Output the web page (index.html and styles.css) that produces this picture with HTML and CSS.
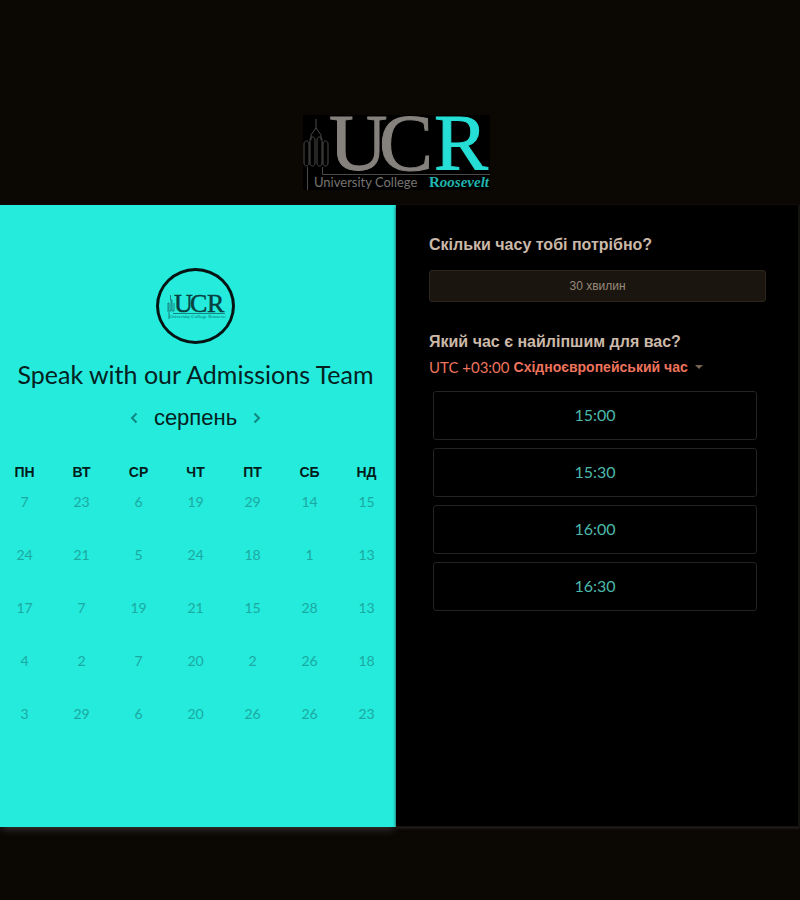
FILE: index.html
```html
<!DOCTYPE html>
<html lang="uk">
<head>
<meta charset="utf-8">
<meta name="viewport" content="width=device-width, initial-scale=1">
<title>Speak with our Admissions Team</title>
<link rel="stylesheet" href="styles.css">
</head>
<body>
<header class="brand">
  <svg class="brand-logo" viewBox="0 0 187 75" role="img" aria-label="University College Roosevelt">
    <rect width="187" height="75" fill="#000"/>
    <g fill="none" stroke="#4b4a48" stroke-width="1">
      <path d="M13 4v9M13 13l-5 7v5M13 13l5 7v5M7 25c0-4 5-4 5 0v23c0 4-5 4-5 0zM14 25c0-4 5-4 5 0v23c0 4-5 4-5 0zM1 29c0-4 5-4 5 0v19c0 4-5 4-5 0zM20 29c0-4 5-4 5 0v19c0 4-5 4-5 0z"/>
      <path d="M4.500 52v23M19.500 52v7.500H187"/>
    </g>
    <g class="serif" font-size="81" stroke-width="1">
      <text x="26" y="55" fill="#85827d" stroke="#85827d">U</text>
      <text x="76" y="55" fill="#85827d" stroke="#85827d">C</text>
      <text x="131" y="55" fill="#25dfd6" stroke="#25dfd6">R</text>
    </g>
    <text class="caption" x="11" y="72" font-size="13" fill="#77746f">University College</text>
    <text class="serif strong" x="126" y="72" font-size="15" fill="#20b5ae">R<tspan class="slanted">oosevelt</tspan></text>
  </svg>
</header>
<main class="scheduler">
  <section class="calendar">
    <div class="avatar">
      <svg class="avatar-logo" viewBox="0 0 60 28" role="img" aria-label="UCR">
        <path d="M4.500 3v5M2 20V11h1v8h2V8h1v11h2v-8M3 20v7M7 21.500h52" fill="none" stroke="#16837f"/>
        <g class="serif" font-size="26" fill="#083f3f" stroke="#083f3f" stroke-width=".5">
          <text x="8" y="20">U</text>
          <text x="24" y="20">C</text>
          <text x="41" y="20">R</text>
        </g>
        <text class="serif" x="3" y="26" font-size="5" fill="#0c6f6c">University College Roosevelt</text>
      </svg>
    </div>
    <h1 class="title">Speak with our Admissions Team</h1>
    <div class="month">
      <button class="step" type="button" aria-label="Попередній місяць">
        <svg viewBox="0 0 8 12"><path d="M6.500 1.500L2 6l4.500 4.500"/></svg>
      </button>
      <h2 class="month-name">серпень</h2>
      <button class="step" type="button" aria-label="Наступний місяць">
        <svg viewBox="0 0 8 12"><path d="M1.500 1.500L6 6l-4.500 4.500"/></svg>
      </button>
    </div>
    <table class="days">
      <thead>
        <tr><th>ПН</th><th>ВТ</th><th>СР</th><th>ЧТ</th><th>ПТ</th><th>СБ</th><th>НД</th></tr>
      </thead>
      <tbody>
        <tr><td>7</td><td>23</td><td>6</td><td>19</td><td>29</td><td>14</td><td>15</td></tr>
        <tr><td>24</td><td>21</td><td>5</td><td>24</td><td>18</td><td>1</td><td>13</td></tr>
        <tr><td>17</td><td>7</td><td>19</td><td>21</td><td>15</td><td>28</td><td>13</td></tr>
        <tr><td>4</td><td>2</td><td>7</td><td>20</td><td>2</td><td>26</td><td>18</td></tr>
        <tr><td>3</td><td>29</td><td>6</td><td>20</td><td>26</td><td>26</td><td>23</td></tr>
      </tbody>
    </table>
  </section>
  <section class="options">
    <h2 class="question">Скільки часу тобі потрібно?</h2>
    <button class="duration" type="button">30 хвилин</button>
    <h2 class="question question-time">Який час є найліпшим для вас?</h2>
    <div class="zone">
      <label class="zone-offset" for="zone">UTC +03:00</label>
      <select class="zone-select" id="zone"><option>Східноєвропейський час</option></select>
      <svg class="caret" viewBox="0 0 8 4"><path d="M0 0h8L4 4z"/></svg>
    </div>
    <div class="slots">
      <button class="slot" type="button">15:00</button>
      <button class="slot" type="button">15:30</button>
      <button class="slot" type="button">16:00</button>
      <button class="slot" type="button">16:30</button>
    </div>
  </section>
</main>
</body>
</html>
```
FILE: styles.css
```css
* {
  box-sizing: border-box;
}

body {
  margin: 0;
  min-height: 100vh;
  background: #0b0703;
  font-family: "Liberation Sans", Arial, sans-serif;
}

h1,
h2 {
  margin: 0;
}

button {
  font: inherit;
  cursor: pointer;
}

.brand {
  display: flex;
  justify-content: center;
  padding: 115px 8px 15px 0;
}

.brand-logo {
  width: 187px;
  height: 75px;
}

.serif {
  font-family: "Liberation Serif", serif;
}

.strong {
  font-weight: 700;
}

.slanted {
  font-style: italic;
}

.caption {
  font-family: Lato, sans-serif;
}

.scheduler {
  display: grid;
  grid-template-columns: 99fr 101fr;
  min-height: 622px;
}

.calendar {
  display: flex;
  flex-direction: column;
  align-items: center;
  padding: 63px 5px 0 0;
  overflow: hidden;
  background: #24ebdc;
  box-shadow: 0 4px 8px -2px #3c3838;
}

.avatar {
  display: flex;
  align-items: center;
  justify-content: center;
  width: 79px;
  height: 76px;
  border: 3px solid #051413;
  border-radius: 50%;
}

.avatar-logo {
  width: 60px;
  height: 28px;
}

.title {
  margin-top: 14px;
  color: #04211f;
  font: 400 25px/32px Lato, sans-serif;
  white-space: nowrap;
}

.month {
  display: flex;
  align-items: center;
  gap: 16px;
  margin-top: 14px;
}

.month-name {
  color: #052220;
  font-size: 22px;
  font-weight: 400;
  line-height: 28px;
}

.step {
  display: flex;
  padding: 0;
  border: 0;
  background: none;
}

.step svg {
  width: 8px;
  height: 12px;
  fill: none;
  stroke: #128780;
  stroke-width: 2;
}

.days {
  align-self: stretch;
  width: calc(100% + 8px);
  margin: 30px -4px 0;
  border-collapse: collapse;
  table-layout: fixed;
  text-align: center;
}

.days th,
.days td {
  padding: 0;
  vertical-align: top;
  line-height: 20px;
}

.days th {
  height: 30px;
  color: #031c1b;
  font-size: 14px;
}

.days td {
  height: 53px;
  color: #1ba9a1;
  font-family: Lato, sans-serif;
  font-size: 14px;
}

.options {
  position: relative;
  padding: 30px 32px 0 33px;
  border: 1px solid #14120f;
  border-width: 0 2px 1px 0;
  background: #000;
  box-shadow: 0 1px 3px #2b2825;
}

.question {
  color: #cbb9a9;
  font-size: 16px;
  line-height: 20px;
}

.duration {
  display: block;
  width: 100%;
  height: 32px;
  margin-top: 15px;
  border: 1px solid #2c251e;
  border-radius: 3px;
  background: #1a150f;
  color: #988a7b;
  font-size: 12px;
}

.question-time {
  margin-top: 30px;
}

.zone {
  display: flex;
  align-items: center;
  gap: 4px;
  margin-top: 5px;
  color: #ed735c;
  line-height: 20px;
}

.zone-offset {
  font-family: Lato, sans-serif;
  font-size: 15px;
}

.zone-select {
  appearance: none;
  padding: 0;
  border: 0;
  background: none;
  color: inherit;
  font: 700 14px/20px "Liberation Sans", Arial, sans-serif;
}

.caret {
  width: 8px;
  height: 4px;
  margin-left: 2px;
  fill: #786551;
  pointer-events: none;
}

.slots {
  display: grid;
  gap: 8px;
  margin: 14px 9px 0 4px;
}

.slot {
  height: 49px;
  padding: 0 0 2px;
  border: 1px solid #25221f;
  border-radius: 3px;
  background: none;
  color: #4bb9a9;
  font-family: Lato, sans-serif;
  font-size: 16px;
}
```
